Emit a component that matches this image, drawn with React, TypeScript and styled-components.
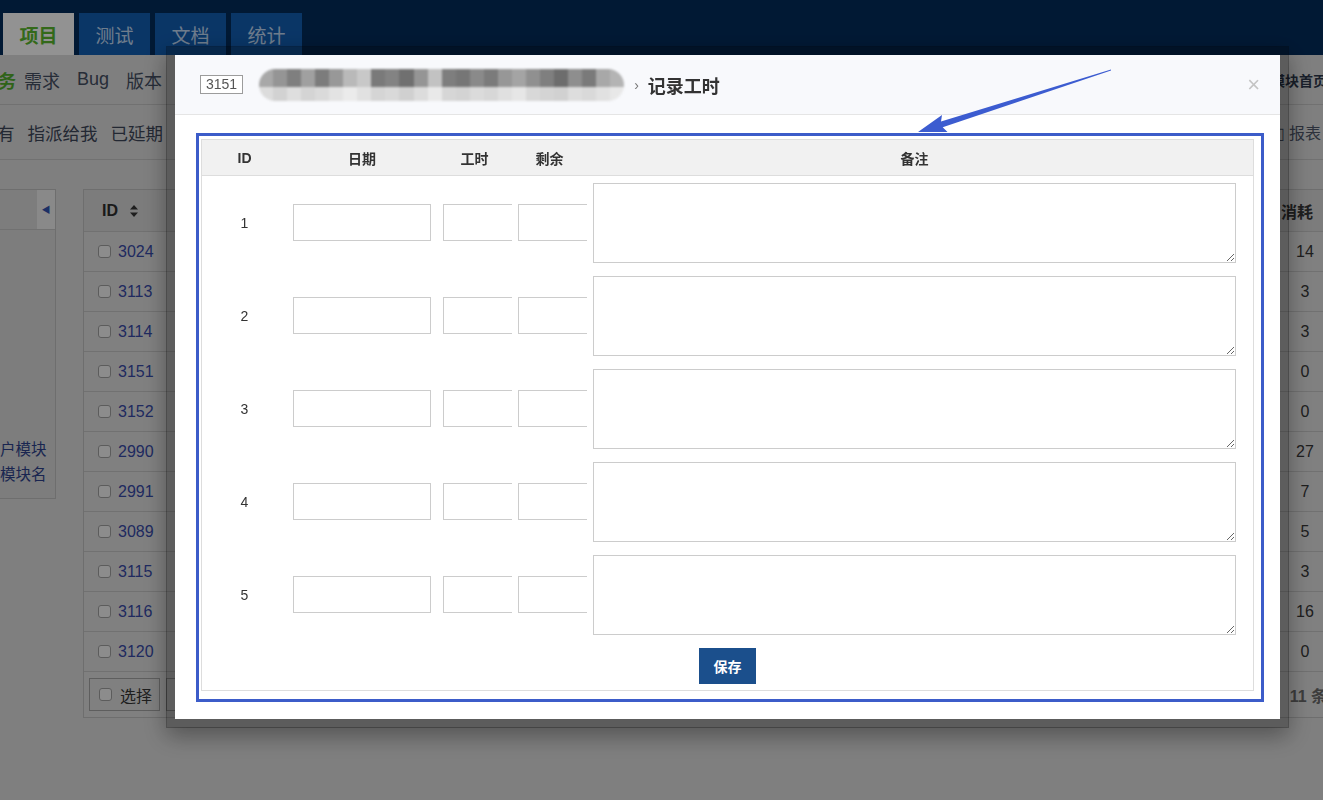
import React from "react";
import styled, { createGlobalStyle } from "styled-components";

const GlobalStyle = createGlobalStyle`
  html, body { margin: 0; padding: 0; }
  body {
    width: 1323px;
    height: 800px;
    overflow: hidden;
    background: #d4d4d4;
    font-family: "Liberation Sans", "Noto Sans CJK SC", sans-serif;
    color: #333;
  }
  * { box-sizing: border-box; }
`;

/* ---------- page behind the dialog ---------- */

const Page = styled.div`
  width: 1323px;
  height: 800px;
  overflow: hidden;
`;

const TopBar = styled.header`
  height: 55px;
  background: #032a58;
  display: flex;
  align-items: flex-end;
  gap: 5px;
  padding-left: 3px;
`;

const Tab = styled.div<{ $active?: boolean }>`
  width: 71px;
  height: 42px;
  display: flex;
  align-items: center;
  justify-content: center;
  font-size: 19px;
  background: ${p => (p.$active ? "#f4f4f4" : "#115aab")};
  color: ${p => (p.$active ? "#55b02c" : "rgba(230,240,252,0.8)")};
  font-weight: ${p => (p.$active ? 700 : 400)};
`;

const SubNav = styled.nav`
  height: 50px;
  display: flex;
  align-items: center;
  gap: 17px;
  font-size: 18px;
  color: #414b5e;
  border-bottom: 1px solid #bcbcbc;
  white-space: nowrap;
`;

const SubItem = styled.span<{ $active?: boolean }>`
  color: ${p => (p.$active ? "#4fa62a" : "inherit")};
  font-weight: ${p => (p.$active ? 700 : 400)};
  margin: ${p => (p.$active ? "0 -9px 0 -2px" : "0")};
`;

const RightLink = styled.span`
  margin-left: auto;
  margin-right: -4px;
  font-size: 14px;
  font-weight: 700;
  color: #2a3447;
`;

const FilterBar = styled.div`
  height: 55px;
  display: flex;
  align-items: center;
  gap: 13px;
  font-size: 17.5px;
  color: #3b4456;
  border-bottom: 1px solid #bcbcbc;
  white-space: nowrap;
`;

const Cut = styled.span`
  margin-left: -3px;
`;

const ReportLink = styled.span`
  margin-left: auto;
  margin-right: 2px;
  font-size: 16px;
  color: #4a5264;
`;

const Main = styled.div`
  display: flex;
  gap: 27px;
  padding-top: 29px;
`;

const Sidebar = styled.aside`
  width: 56px;
  height: 310px;
  flex: none;
  border: 1px solid #b8b8b8;
  border-left: none;
  background: #d0d0d0;
  display: flex;
  flex-direction: column;
`;

const SideHead = styled.div`
  height: 40px;
  border-bottom: 1px solid #bdbdbd;
  display: flex;
  justify-content: flex-end;
`;

const SideToggle = styled.div`
  width: 18px;
  background: #e4e4e4;
  display: flex;
  align-items: center;
  justify-content: center;
  font-size: 9px;
  color: #2f4fa8;
`;

const SideText = styled.div`
  margin-top: auto;
  padding: 0 13px 11px 0;
  font-size: 15.5px;
  line-height: 25px;
  color: #2c3f86;
  text-align: right;
  white-space: nowrap;
`;

const BgTable = styled.div`
  flex: 1;
  border: 1px solid #b8b8b8;
  border-right: none;
  background: #d6d6d6;
`;

const BgRow = styled.div<{ $head?: boolean }>`
  height: ${p => (p.$head ? 42 : 40)}px;
  display: grid;
  grid-template-columns: 100px 1fr 36px;
  align-items: center;
  border-bottom: 1px solid #bcbcbc;
  font-size: 16px;
  font-weight: ${p => (p.$head ? 700 : 400)};
  background: ${p => (p.$head ? "#cfcfcf" : "#d6d6d6")};
`;

const IdCell = styled.div`
  display: flex;
  align-items: center;
  gap: 7px;
  padding-left: 14px;
  color: #3446a0;
`;

const HeadId = styled.div`
  display: flex;
  align-items: center;
  gap: 12px;
  padding-left: 18px;
  color: #2c2c2c;
`;

const NumCell = styled.div`
  text-align: center;
  color: #333;
  white-space: nowrap;
`;

const HeadNum = styled(NumCell)`
  margin-left: -16px;
`;

const Check = styled.span`
  width: 13px;
  height: 13px;
  border: 1px solid #9a9a9a;
  border-radius: 3px;
  background: #e9e9e9;
  flex: none;
`;

const BgFooter = styled.div`
  height: 45px;
  display: flex;
  align-items: center;
  padding-left: 5px;
  gap: 6px;
  white-space: nowrap;
`;

const SelectBtn = styled.div`
  width: 71px;
  height: 33px;
  border: 1px solid #9d9d9d;
  display: flex;
  align-items: center;
  gap: 8px;
  padding-left: 9px;
  font-size: 16px;
  color: #333;
`;

const Pager = styled.span`
  margin-left: auto;
  margin-right: -4px;
  font-size: 16px;
  font-weight: 700;
  color: #666;
`;

/* ---------- backdrop and dialog ---------- */

const Backdrop = styled.div`
  position: fixed;
  inset: 0;
  background: rgba(0, 0, 0, 0.4);
`;

const Dialog = styled.div`
  position: fixed;
  left: 166px;
  top: 46px;
  width: 1123px;
  border: 9px solid rgba(0, 0, 0, 0.28);
  background: #fff;
  background-clip: padding-box;
  box-shadow: 0 8px 22px rgba(0, 0, 0, 0.35);
`;

const DialogHead = styled.div`
  height: 60px;
  background: #f8f9fc;
  border-bottom: 1px solid #e5e5e5;
  display: flex;
  align-items: center;
  padding: 0 20px 0 25px;
`;

const Badge = styled.span`
  height: 19px;
  padding: 0 5px;
  border: 1px solid #9c9c9c;
  font-size: 14px;
  line-height: 17px;
  color: #555;
  background: #fff;
`;

const Blurred = styled.div`
  margin-left: 16px;
  width: 365px;
  height: 32px;
  border-radius: 16px;
  overflow: hidden;
  filter: blur(1.1px);
  display: grid;
  grid-template-rows: 18px 14px;
`;

const BlurRow = styled.div`
  display: flex;
`;

const Pix = styled.span<{ $c: string }>`
  flex: 1;
  background: ${p => p.$c};
`;

const Crumb = styled.span`
  margin-left: 10px;
  font-size: 14px;
  color: #777;
`;

const Title = styled.h3`
  margin: 0 0 0 9px;
  font-size: 18px;
  font-weight: 700;
  color: #333;
`;

const Close = styled.span`
  margin-left: auto;
  font-size: 22px;
  color: #c4c4c4;
  line-height: 1;
`;

const DialogBody = styled.div`
  padding: 24px 26px 28px;
`;

const LogTable = styled.div`
  display: grid;
  grid-template-columns: 85px 150px 75px 75px 1fr;
  border: 1px solid #ddd;
`;

const HeadCell = styled.div`
  height: 36px;
  background: #f1f1f1;
  border-bottom: 1px solid #ddd;
  display: flex;
  align-items: center;
  justify-content: center;
  padding: 0 6px;
  font-size: 14px;
  font-weight: 700;
  color: #333;
`;

const NoteHead = styled(HeadCell)`
  padding: 0 17px 0 6px;
`;

const Cell = styled.div`
  height: 93px;
  display: flex;
  align-items: center;
  padding-left: 6px;
`;

const IdNum = styled(Cell)`
  justify-content: center;
  padding: 0;
  font-size: 14px;
  color: #333;
`;

const NoteCell = styled(Cell)`
  padding-right: 17px;
`;

const Field = styled.input<{ $w: number; $open?: boolean }>`
  width: ${p => p.$w}px;
  height: 37px;
  border: 1px solid #ccc;
  border-right: ${p => (p.$open ? "none" : "1px solid #ccc")};
  outline: none;
  font: inherit;
  padding: 0 6px;
`;

const Note = styled.textarea`
  width: 100%;
  height: 80px;
  border: 1px solid #ccc;
  resize: vertical;
  outline: none;
  font: inherit;
  margin: 0;
`;

const Actions = styled.div`
  grid-column: 1 / -1;
  height: 49px;
  display: flex;
  align-items: center;
  justify-content: center;
`;

const SaveBtn = styled.button`
  width: 57px;
  height: 36px;
  border: none;
  background: #1b4f8c;
  color: #fff;
  font-family: "Liberation Sans", "Noto Sans CJK SC", sans-serif;
  font-size: 14px;
  font-weight: 700;
  padding: 0;
`;

const Annotation = styled.svg`
  position: fixed;
  left: 0;
  top: 0;
  pointer-events: none;
`;

const topPix = [
  "#a8a8a8", "#959595", "#7f7f7f", "#a0a0a0", "#7c7c7c", "#989898", "#b9b9b9", "#c8c8c8",
  "#7a7a7a", "#838383", "#707070", "#959595", "#c2c2c2", "#7e7e7e", "#767676", "#8a8a8a",
  "#7b7b7b", "#979797", "#a4a4a4", "#909090", "#7f7f7f", "#6d6d6d", "#8e8e8e", "#7a7a7a",
  "#a8a8a8", "#b4b4b4",
];
const botPix = [
  "#dcdcdc", "#d2d2d2", "#dedede", "#d4d4d4", "#dadada", "#e3e3e3", "#ebebeb", "#e1e1e1",
  "#d5d5d5", "#d9d9d9", "#d0d0d0", "#dcdcdc", "#e9e9e9", "#d6d6d6", "#d3d3d3", "#dbdbdb",
  "#d7d7d7", "#e0e0e0", "#e6e6e6", "#d8d8d8", "#d4d4d4", "#d1d1d1", "#dddddd", "#d9d9d9",
  "#e1e1e1", "#e8e8e8",
];

const bgRows: [string, string][] = [
  ["3024", "14"], ["3113", "3"], ["3114", "3"], ["3151", "0"], ["3152", "0"], ["2990", "27"],
  ["2991", "7"], ["3089", "5"], ["3115", "3"], ["3116", "16"], ["3120", "0"],
];

const SortIcon = () => (
  <svg width="8" height="12" viewBox="0 0 8 12">
    <path d="M4 0 L8 4.5 H0 Z M4 12 L0 7.5 H8 Z" fill="#333" />
  </svg>
);

export default function App() {
  return (
    <>
      <GlobalStyle />
      <Page>
        <TopBar>
          <Tab $active>项目</Tab>
          <Tab>测试</Tab>
          <Tab>文档</Tab>
          <Tab>统计</Tab>
        </TopBar>
        <SubNav>
          <SubItem $active>务</SubItem>
          <SubItem>需求</SubItem>
          <SubItem>Bug</SubItem>
          <SubItem>版本</SubItem>
          <RightLink>模块首页</RightLink>
        </SubNav>
        <FilterBar>
          <Cut>有</Cut>
          <span>指派给我</span>
          <span>已延期</span>
          <ReportLink>▯ 报表</ReportLink>
        </FilterBar>
        <Main>
          <Sidebar>
            <SideHead>
              <SideToggle>◀</SideToggle>
            </SideHead>
            <SideText>
              户模块
              <br />
              模块名
            </SideText>
          </Sidebar>
          <BgTable>
            <BgRow $head>
              <HeadId>
                ID <SortIcon />
              </HeadId>
              <div />
              <HeadNum>消耗</HeadNum>
            </BgRow>
            {bgRows.map(([id, used]) => (
              <BgRow key={id}>
                <IdCell>
                  <Check />
                  {id}
                </IdCell>
                <div />
                <NumCell>{used}</NumCell>
              </BgRow>
            ))}
            <BgFooter>
              <SelectBtn>
                <Check />
                选择
              </SelectBtn>
              <SelectBtn />
              <Pager>11 条</Pager>
            </BgFooter>
          </BgTable>
        </Main>
      </Page>

      <Backdrop />

      <Dialog>
        <DialogHead>
          <Badge>3151</Badge>
          <Blurred>
            <BlurRow>
              {topPix.map((c, i) => (
                <Pix key={i} $c={c} />
              ))}
            </BlurRow>
            <BlurRow>
              {botPix.map((c, i) => (
                <Pix key={i} $c={c} />
              ))}
            </BlurRow>
          </Blurred>
          <Crumb>›</Crumb>
          <Title>记录工时</Title>
          <Close>×</Close>
        </DialogHead>
        <DialogBody>
          <LogTable>
            <HeadCell>ID</HeadCell>
            <HeadCell>日期</HeadCell>
            <HeadCell>工时</HeadCell>
            <HeadCell>剩余</HeadCell>
            <NoteHead>备注</NoteHead>
            {[1, 2, 3, 4, 5].map(n => (
              <React.Fragment key={n}>
                <IdNum>{n}</IdNum>
                <Cell>
                  <Field $w={138} />
                </Cell>
                <Cell>
                  <Field $w={69} $open />
                </Cell>
                <Cell>
                  <Field $w={69} $open />
                </Cell>
                <NoteCell>
                  <Note />
                </NoteCell>
              </React.Fragment>
            ))}
            <Actions>
              <SaveBtn>保存</SaveBtn>
            </Actions>
          </LogTable>
        </DialogBody>
      </Dialog>

      <Annotation width="1323" height="800" viewBox="0 0 1323 800">
        <rect x="197.5" y="134.5" width="1065" height="566" fill="none" stroke="#3c5cc9" strokeWidth="3" />
        <polygon
          points="1111,69.5 941,121.4 942,115 918,132 947.5,132 942.7,127.2 1111,70.5"
          fill="#3c5cd0"
        />
      </Annotation>
    </>
  );
}
